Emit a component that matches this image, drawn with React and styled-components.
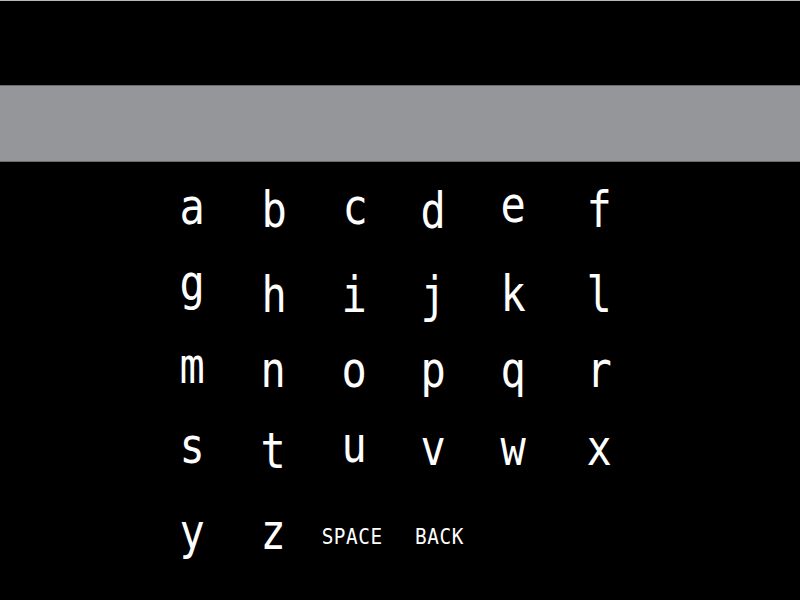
import React from "react";
import styled, { createGlobalStyle } from "styled-components";

const GlobalStyle = createGlobalStyle`
  html, body {
    margin: 0;
    padding: 0;
    background: #000;
  }
  body {
    font-family: "DejaVu Sans Mono", "Liberation Mono", monospace;
  }
`;

const Screen = styled.div`
  width: 800px;
  height: 600px;
  background: #000;
  border-top: 1px solid #b9b9b9;
  box-sizing: border-box;
  display: flex;
  flex-direction: column;
  overflow: hidden;
`;

const Header = styled.div`
  height: 84px;
`;

// the text entry bar
const InputBar = styled.div`
  height: 75px;
  background: #95969a;
  border-top: 1px solid #6b6c6f;
  border-bottom: 1px solid #6b6c6f;
`;

const Keyboard = styled.div`
  display: grid;
  grid-template-columns: repeat(6, 81.4px);
  grid-auto-rows: 81px;
  margin-top: 6px;
  padding-left: 151px;
`;

const Key = styled.div`
  display: flex;
  justify-content: center;
  color: #fff;
  font-size: ${({ $small }) => ($small ? "21px" : "50px")};
  line-height: 80px;
  letter-spacing: ${({ $small }) => ($small ? "0.6px" : "0")};
`;

const Glyph = styled.span`
  display: inline-block;
  transform: translate(${({ $dx }) => $dx || 0}px, ${({ $dy }) => $dy || 0}px)
    scaleX(${({ $small }) => ($small ? 0.92 : 0.84)});
`;

// small baseline / x wobble per key, as on the screen
const keys = [
  ["a", 0, -1], ["b", 1, 2], ["c", 1, -1], ["d", -3, 3], ["e", -4, -3], ["f", 0, 2],
  ["g", 0, -6], ["h", 1, 6], ["i", 0, 6], ["j", -3, 6], ["k", -4, 5], ["l", 0, 6],
  ["m", 0, -4], ["n", 0, 0], ["o", 0, 0], ["p", -3, 0], ["q", -4, 0], ["r", 0, 0],
  ["s", 0, -5], ["t", 0, 0], ["u", 0, -6], ["v", -3, -3], ["w", -4, -3], ["x", 0, -3],
  ["y", 0, 0], ["z", 0, 0], ["SPACE", -2, 5, true], ["BACK", 4, 5, true],
];

const App = () => {
  return (
    <>
      <GlobalStyle />
      <Screen>
        <Header />
        <InputBar />
        <Keyboard>
          {keys.map(([label, dx, dy, small]) => (
            <Key key={label} $small={small}>
              <Glyph $dx={dx} $dy={dy} $small={small}>
                {label}
              </Glyph>
            </Key>
          ))}
        </Keyboard>
      </Screen>
    </>
  );
};

export default App;
